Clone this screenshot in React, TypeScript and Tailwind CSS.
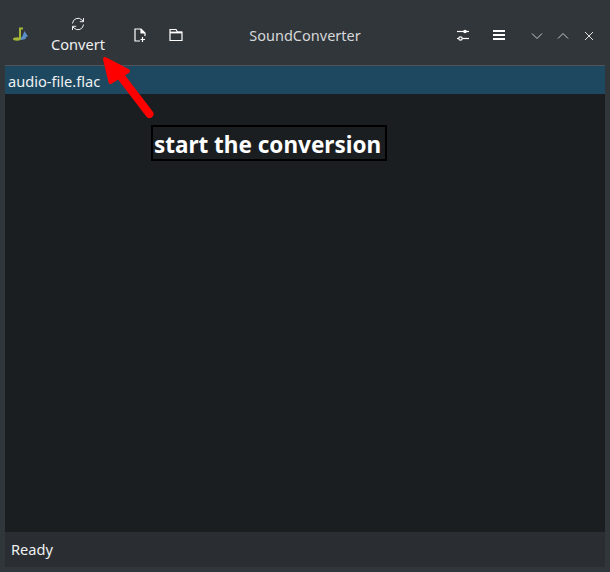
import React from "react";

const ToolIcon: React.FC<{ children: React.ReactNode; size?: number }> = ({ children, size = 16 }) => (
    <svg width={size} height={size} viewBox="0 0 16 16" fill="none" stroke="currentColor" strokeWidth="1.2">
        {children}
    </svg>
);

export default function App() {
    return (
        <div className="relative w-[610px] h-[572px] bg-[#31363b] flex flex-col overflow-hidden font-['Noto_Sans',sans-serif] text-[#eff0f1]">
            <header className="h-[65px] pt-[6px] flex items-center text-[14.6px] shrink-0">
                <div className="w-[40px] flex justify-center">
                    <svg width="18" height="18" viewBox="0 0 18 18" className="-mt-[2px] ml-[1px]">
                        <path d="M8 13V2.500H11" fill="none" stroke="#a3b536" strokeWidth="2" />
                        <ellipse cx="5" cy="13" rx="4" ry="1.700" fill="#a3b536" />
                        <path d="M12.500 5L16 10.500L14 11L13.500 13L9.500 14L8.500 12.800L10.500 10Z" fill="#5a8fc8" />
                    </svg>
                </div>
                <div className="w-[76px] flex flex-col items-center gap-[3px] pb-[2px]">
                    <ToolIcon size={16}>
                        <path d="M2.500 7.500A5.500 5.500 0 0 1 12 4L13.500 5.500M13.500 2V5.700H9.800" strokeWidth="1" />
                        <path d="M13.500 8.500A5.500 5.500 0 0 1 4 12L2.500 10.500M2.500 14V10.300H6.200" strokeWidth="1" />
                    </ToolIcon>
                    <span className="leading-[19px]">Convert</span>
                </div>
                <div className="w-[48px] flex justify-center text-white -mt-[1px]">
                    <ToolIcon>
                        <path d="M8 14H3V2H9L13 6V9" />
                        <path d="M9 2V6H13" fill="currentColor" />
                        <path d="M10.500 10V15M8.500 12.500H13" />
                    </ToolIcon>
                </div>
                <div className="w-[24px] flex justify-center text-white -mt-[1px]">
                    <ToolIcon>
                        <path d="M2 13.500V2.500H8L9.500 5H14V13.500Z" />
                        <path d="M2 5.500H14" strokeWidth="1.800" />
                    </ToolIcon>
                </div>
                <div className="flex-1 text-center pr-[23px] text-[14.5px] text-[#d5d7d8]">SoundConverter</div>
                <div className="w-[36px] flex justify-center text-white -mt-[1px]">
                    <ToolIcon>
                        <path d="M2 4.500H14" />
                        <circle cx="10" cy="4.500" r="1.800" fill="currentColor" stroke="none" />
                        <path d="M2 11.500H14" />
                        <circle cx="5.500" cy="11.500" r="1.700" fill="#31363b" />
                    </ToolIcon>
                </div>
                <div className="w-[36px] flex justify-center -mt-[1px]">
                    <div className="w-[12px] flex flex-col gap-[2px]">
                        <div className="h-[2px] bg-white" />
                        <div className="h-[2px] bg-white" />
                        <div className="h-[2px] bg-white" />
                    </div>
                </div>
                <div className="w-[26px] ml-[7px] flex justify-center text-[#c9cbcc]">
                    <ToolIcon>
                        <path d="M3 5.500L8 10.500L13 5.500" strokeWidth="1" />
                    </ToolIcon>
                </div>
                <div className="w-[26px] flex justify-center text-[#c9cbcc]">
                    <ToolIcon>
                        <path d="M3 10.500L8 5.500L13 10.500" strokeWidth="1" />
                    </ToolIcon>
                </div>
                <div className="w-[26px] mr-[8px] flex justify-center text-[#e0e1e2]">
                    <ToolIcon>
                        <path d="M4 4L12 12M12 4L4 12" strokeWidth="1" />
                    </ToolIcon>
                </div>
            </header>

            <main className="mx-[5px] flex-1 flex flex-col bg-[#1b1e20] border-t border-[#4f5459]">
                <div className="h-[28px] bg-[#1e485f] pl-[3px] pt-[2px] flex items-center text-[14.6px] leading-none">audio-file.flac</div>
            </main>

            <footer className="mx-[5px] mb-[5px] h-[35px] shrink-0 bg-[#2a2e32] pl-[6px] flex items-center text-[14.6px]">Ready</footer>

            <div className="absolute left-[151px] top-[125px] w-[236px] h-[36px] pt-[5px] pr-[3px] border-[2px] border-black bg-[#1b1e20] flex items-center justify-center font-bold text-[22.5px] text-white whitespace-nowrap leading-none">
                start the conversion
            </div>
            <svg className="absolute left-[95px] top-[50px]" width="70" height="75" viewBox="0 0 70 75">
                <path d="M54.500 64L27 28" stroke="#f00" strokeWidth="8" strokeLinecap="round" />
                <path d="M10 9L33 21L15.500 32Z" fill="#f00" stroke="#f00" strokeWidth="4" strokeLinejoin="round" />
            </svg>
        </div>
    );
}
